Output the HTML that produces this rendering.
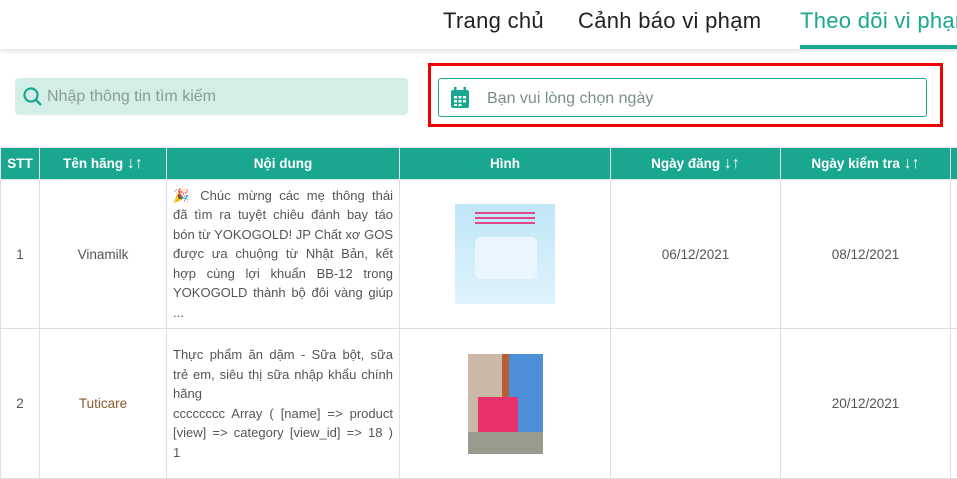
<!DOCTYPE html>
<html><head><meta charset="utf-8"><style>
*{margin:0;padding:0;box-sizing:border-box}
body{width:957px;height:479px;overflow:hidden;background:#fff;font-family:"Liberation Sans",sans-serif;color:#555;position:relative}
.hdr{position:absolute;left:0;top:0;width:957px;height:49px;background:#fff;box-shadow:0 2px 4px rgba(0,0,0,.12)}
.nav{position:absolute;top:8px;font-size:22px;color:#222;white-space:nowrap;letter-spacing:0.3px}
.ul{position:absolute;left:800px;top:45px;width:157px;height:4px;background:#1aa78f}
.search{position:absolute;left:15px;top:78px;width:393px;height:37px;background:#d3eee6;border-radius:4px}
.search span{position:absolute;left:32px;top:10px;font-size:16px;color:#8a9a95}
.red{position:absolute;left:428px;top:63px;width:515px;height:64px;border:3px solid #e00}
.date{position:absolute;left:438px;top:78px;width:489px;height:39px;border:1px solid #1aa78f;border-radius:3px}
.date span{position:absolute;left:48px;top:11px;font-size:16px;color:#7a8e88}
table{position:absolute;left:0;top:147px;border-collapse:collapse;table-layout:fixed;width:970px}
th{background:#1aa78f;color:#fff;font-size:13.5px;height:32px;border:1px solid #e3e3e3;font-weight:bold}
td{border:1px solid #dddde3;font-size:13.5px;text-align:center;vertical-align:middle;color:#555}
td.txt{padding:0 6px;line-height:19.5px;color:#555;font-size:13px}
.j{text-align:justify;text-align-last:justify;white-space:nowrap;overflow:hidden}
.l{text-align:left;white-space:nowrap;overflow:hidden}
.ar{font-weight:normal;font-size:16px}
</style></head><body>
<div class="hdr"></div>
<div class="nav" style="left:443px">Trang chủ</div>
<div class="nav" style="left:578px">Cảnh báo vi phạm</div>
<div class="nav" style="left:800px;color:#1aa78f">Theo dõi vi phạm</div>
<div class="ul"></div>
<div class="search"><svg style="position:absolute;left:8px;top:9px" width="20" height="20" viewBox="0 0 20 20"><circle cx="8" cy="8" r="6.5" fill="none" stroke="#1aa78f" stroke-width="2.2"/><line x1="12.5" y1="12.5" x2="18" y2="18" stroke="#1aa78f" stroke-width="2.4"/></svg><span>Nhập thông tin tìm kiếm</span></div>
<div class="red"></div>
<div class="date"><svg style="position:absolute;left:11px;top:8px" width="20" height="22" viewBox="0 0 20 22"><rect x="1" y="3" width="18" height="18" rx="2" fill="#1aa78f"/><rect x="4" y="0" width="2.5" height="5" fill="#1aa78f"/><rect x="13.5" y="0" width="2.5" height="5" fill="#1aa78f"/><g fill="#fff"><rect x="4" y="9" width="3" height="2.5"/><rect x="8.5" y="9" width="3" height="2.5"/><rect x="13" y="9" width="3" height="2.5"/><rect x="4" y="13" width="3" height="2.5"/><rect x="8.5" y="13" width="3" height="2.5"/><rect x="13" y="13" width="3" height="2.5"/><rect x="4" y="17" width="3" height="2"/><rect x="8.5" y="17" width="3" height="2"/></g></svg><span>Bạn vui lòng chọn ngày</span></div>
<table>
<colgroup><col style="width:39px"><col style="width:127px"><col style="width:233px"><col style="width:211px"><col style="width:170px"><col style="width:170px"><col style="width:20px"></colgroup>
<tr><th>STT</th><th>Tên hãng <span class="ar">↓↑</span></th><th>Nội dung</th><th>Hình</th><th>Ngày đăng <span class="ar">↓↑</span></th><th>Ngày kiểm tra <span class="ar">↓↑</span></th><th></th></tr>
<tr style="height:149px"><td>1</td><td>Vinamilk</td><td class="txt"><div class="j">🎉 Chúc mừng các mẹ thông thái</div><div class="j">đã tìm ra tuyệt chiêu đánh bay táo</div><div class="j">bón từ YOKOGOLD! JP Chất xơ GOS</div><div class="j">được ưa chuộng từ Nhật Bản, kết</div><div class="j">hợp cùng lợi khuẩn BB-12 trong</div><div class="j">YOKOGOLD thành bộ đôi vàng giúp</div><div class="l">...</div></td><td><div style="margin:0 auto;width:100px;height:100px;background:linear-gradient(180deg,#bfe6f7,#dff3fb);position:relative"><div style="position:absolute;left:20px;top:33px;width:62px;height:42px;background:#eaf6fd;border-radius:6px"></div><div style="position:absolute;left:20px;top:8px;width:60px;height:14px;background:repeating-linear-gradient(180deg,#e04a8a 0 2px,transparent 2px 5px)"></div></div></td><td>06/12/2021</td><td>08/12/2021</td><td></td></tr>
<tr style="height:150px"><td>2</td><td style="color:#8a5a2a">Tuticare</td><td class="txt"><div class="j">Thực phẩm ăn dặm - Sữa bột, sữa</div><div class="j">trẻ em, siêu thị sữa nhập khẩu chính</div><div class="l">hãng</div><div class="j">cccccccc Array ( [name] =&gt; product</div><div class="j">[view] =&gt; category [view_id] =&gt; 18 )</div><div class="l">1</div></td><td><div style="margin:0 auto;width:75px;height:100px;background:linear-gradient(90deg,#c9b9a6 0 45%,#b55f35 45% 55%,#4d8fd6 55%);position:relative"><div style="position:absolute;left:10px;top:43px;width:40px;height:35px;background:#e8306a"></div><div style="position:absolute;left:0;top:78px;width:75px;height:22px;background:#9a9a8e"></div></div></td><td></td><td>20/12/2021</td><td></td></tr>
</table>
</body></html>
